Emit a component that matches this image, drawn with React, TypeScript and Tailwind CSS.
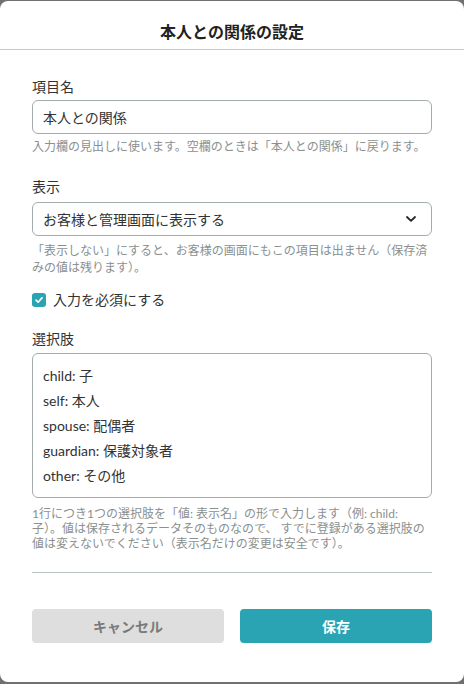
import React from "react";

export default function App() {
  return (
    <div
      className="w-[464px] h-[684px] bg-[#707070] pt-px pb-[2px] font-['Lato','Noto_Sans_CJK_JP',sans-serif]"
    >
      <div className="h-full bg-white rounded-[8px] flex flex-col text-[#333333]">
        <div className="h-[49px] border-b border-[#c3cbcb] flex justify-center pt-[19px]">
          <h1 className="text-[16px] leading-[24px] font-bold text-[#222222]">本人との関係の設定</h1>
        </div>
        <div className="px-8 pt-[27px] flex flex-col">
          <label className="text-[14px] leading-[20px]">項目名</label>
          <div className="mt-[3px] h-[34px] border border-[#a3adad] rounded-[6px] flex items-center px-[10px] text-[14px]">
            本人との関係
          </div>
          <p className="mt-[4px] text-[12px] leading-[17px] text-[#8a9090]">
            入力欄の見出しに使います。空欄のときは「本人との関係」に戻ります。
          </p>

          <label className="mt-[22px] text-[14px] leading-[20px]">表示</label>
          <div className="mt-[5px] h-[34px] border border-[#a3adad] rounded-[6px] flex items-center justify-between pl-[10px] pr-[15px] text-[14px]">
            <span>お客様と管理画面に表示する</span>
            <svg width="10" height="6" viewBox="0 0 10 6" fill="none">
              <path d="M1 1 5 4.8 9 1" stroke="#222" strokeWidth="1.8" strokeLinecap="round" strokeLinejoin="round" />
            </svg>
          </div>
          <p className="mt-[6px] text-[12px] leading-[17px] text-[#8a9090]">
            「表示しない」にすると、お客様の画面にもこの項目は出ません（保存済みの値は残ります）。
          </p>

          <div className="mt-[14px] h-[20px] flex items-center gap-[7px]">
            <div className="w-[14px] h-[14px] rounded-[3px] bg-[#2aa3b2] flex items-center justify-center">
              <svg width="10" height="10" viewBox="0 0 10 10" fill="none">
                <path d="M2 5.2 4.1 7.2 8 2.9" stroke="white" strokeWidth="1.7" strokeLinecap="round" strokeLinejoin="round" />
              </svg>
            </div>
            <span className="text-[14px] leading-[20px]">入力を必須にする</span>
          </div>

          <label className="mt-[19px] text-[14px] leading-[20px]">選択肢</label>
          <div className="mt-[4px] h-[145px] border border-[#a3adad] rounded-[6px] px-[10px] py-[9px] text-[14px] leading-[25px]">
            <div>child: 子</div>
            <div>self: 本人</div>
            <div>spouse: 配偶者</div>
            <div>guardian: 保護対象者</div>
            <div>other: その他</div>
          </div>
          <p className="mt-[8px] text-[12px] leading-[15px] text-[#8a9090]">
            1行につき1つの選択肢を「値: 表示名」の形で入力します（例: child:
            <br />
            子）。値は保存されるデータそのものなので、 すでに登録がある選択肢の値は変えないでください（表示名だけの変更は安全です）。
          </p>

          <div className="mt-[21px] border-t border-[#b9c3c3]" />

          <div className="mt-[36px] grid grid-cols-2 gap-4">
            <button className="h-[34px] rounded-[4px] bg-[#dedede] text-[#7a7a7a] text-[14px] font-bold">
              キャンセル
            </button>
            <button className="h-[34px] rounded-[4px] bg-[#2aa3b2] text-white text-[14px] font-bold">
              保存
            </button>
          </div>
        </div>
      </div>
    </div>
  );
}
